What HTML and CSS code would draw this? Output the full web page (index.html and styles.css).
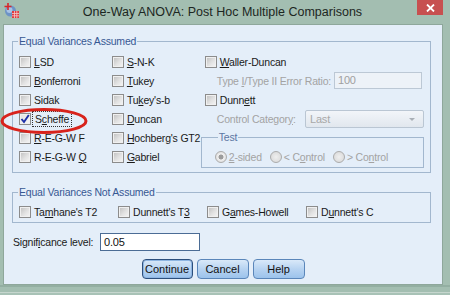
FILE: index.html
```html
<!DOCTYPE html>
<html lang="en">
<head>
    <meta charset="UTF-8">
    <title>One-Way ANOVA: Post Hoc Multiple Comparisons</title>
    <link rel="stylesheet" href="styles.css">
</head>
<body>
<div class="window">
    <div class="title_bar">
        <div class="app_icon">
            <svg width="15" height="15" viewBox="0 0 15 15">
                <circle cx="6.5" cy="8" r="5.5" fill="#6d93c6"/>
                <circle cx="5.5" cy="7" r="3" fill="#a9c3e4"/>
                <path d="M0.5 3.5 H7.5 M4 0 V7" stroke="#d8262a" stroke-width="1.6"/>
                <rect x="8" y="8" width="7" height="7" fill="#e03a3e"/>
                <path d="M8 10.5 H15 M8 12.8 H15 M10.5 8 V15 M12.8 8 V15" stroke="#f6c9c9" stroke-width="0.8"/>
            </svg>
        </div>
        <div class="title_text">One-Way ANOVA: Post Hoc Multiple Comparisons</div>
        <div class="close_btn">
            <svg width="9" height="8" viewBox="0 0 9 8">
                <path d="M1 0.5 L8 7.5 M8 0.5 L1 7.5" stroke="#ffffff" stroke-width="1.8"/>
            </svg>
        </div>
    </div>

    <div class="client">
        <fieldset class="group group_eq">
            <legend>Equal Variances Assumed</legend>
            <div class="col col_a">
                <div class="row"><span class="cb"></span><span><u>L</u>SD</span></div>
                <div class="row"><span class="cb"></span><span><u>B</u>onferroni</span></div>
                <div class="row"><span class="cb"></span><span>Sidak</span></div>
                <div class="row"><span class="cb checked">
                    <svg width="10" height="10" viewBox="0 0 10 10">
                        <path d="M1.5 5 L4 8 L8.8 1" fill="none" stroke="#1c2fa8" stroke-width="1.9"/>
                    </svg></span><span class="focus">S<u>c</u>heffe</span></div>
                <div class="row"><span class="cb"></span><span><u>R</u>-E-G-W F</span></div>
                <div class="row"><span class="cb"></span><span>R-E-G-W <u>Q</u></span></div>
            </div>
            <div class="col col_b">
                <div class="row"><span class="cb"></span><span><u>S</u>-N-K</span></div>
                <div class="row"><span class="cb"></span><span><u>T</u>ukey</span></div>
                <div class="row"><span class="cb"></span><span>Tu<u>k</u>ey's-b</span></div>
                <div class="row"><span class="cb"></span><span><u>D</u>uncan</span></div>
                <div class="row"><span class="cb"></span><span><u>H</u>ochberg's GT2</span></div>
                <div class="row"><span class="cb"></span><span><u>G</u>abriel</span></div>
            </div>
            <div class="col col_c">
                <div class="row"><span class="cb"></span><span><u>W</u>aller-Duncan</span></div>
                <div class="row sub_row">
                    <span class="dim">Type <u>I</u>/Type II Error Ratio:</span>
                    <span class="text_box ratio_box">100</span>
                </div>
                <div class="row"><span class="cb"></span><span>Dunn<u>e</u>tt</span></div>
                <div class="row sub_row">
                    <span class="dim">Control Categor<u>y</u>:</span>
                    <span class="combo">Last<span class="combo_arrow"></span></span>
                </div>
                <fieldset class="test_group">
                    <legend>Test</legend>
                    <div class="row radio_row">
                        <span class="radio_item"><span class="radio on"></span><span class="dim"><u>2</u>-sided</span></span>
                        <span class="radio_item"><span class="radio"></span><span class="dim">&lt; C<u>o</u>ntrol</span></span>
                        <span class="radio_item"><span class="radio"></span><span class="dim">&gt; Co<u>n</u>trol</span></span>
                    </div>
                </fieldset>
            </div>
        </fieldset>

        <fieldset class="group group_neq">
            <legend>Equal Variances Not Assumed</legend>
            <div class="row neq_item w99"><span class="cb"></span><span>Ta<u>m</u>hane's T2</span></div>
            <div class="row neq_item w89"><span class="cb"></span><span>Dunnett's T<u>3</u></span></div>
            <div class="row neq_item w99"><span class="cb"></span><span>G<u>a</u>mes-Howell</span></div>
            <div class="row neq_item"><span class="cb"></span><span>D<u>u</u>nnett's C</span></div>
        </fieldset>

        <div class="sig_row">
            <span class="sig_label">Signif<u>i</u>cance level:</span>
            <span class="text_box sig_box">0.05</span>
        </div>

        <div class="button_row">
            <div class="btn btn_default w51">Continue</div>
            <div class="btn w52">Cancel</div>
            <div class="btn w52">Help</div>
        </div>
    </div>

    <div class="frame_bottom">
        <div class="sheet_strip"></div>
    </div>

    <!-- red marker drawn over the dialog -->
    <svg class="marker" width="92" height="30" viewBox="0 0 92 30">
        <ellipse cx="44" cy="15" rx="42" ry="11.5" fill="none" stroke="#d8231c" stroke-width="3"/>
    </svg>
</div>
</body>
</html>
```

FILE: styles.css
```css
body {
    margin: 0;
    background-color: #a3beb1;
    font-family: "Liberation Sans", Arial, sans-serif;
}

.window {
    position: relative;
    width: 450px;
    height: 295px;
    display: flex;
    flex-direction: column;
    background-color: #a3beb1;
    overflow: hidden;
}

.title_bar {
    height: 24px;
    flex: none;
    display: grid;
    grid-template-columns: 1fr auto 1fr;
    align-items: start;
    padding-right: 5px;
}

.app_icon {
    margin: 3px 0 0 4px;
    width: 15px;
    height: 15px;
}

.title_text {
    font-size: 12.5px;
    line-height: 24px;
    color: #1c2622;
    white-space: nowrap;
}

.close_btn {
    justify-self: end;
    width: 26px;
    height: 15px;
    margin-right: 2px;
    background-color: #c75050;
    display: flex;
    align-items: center;
    justify-content: center;
}

.client {
    flex: none;
    box-sizing: border-box;
    height: 261px;
    margin: 0 7px 0 3px;
    border: 1px solid #8ea79b;
    background-color: #e4eef9;
    padding: 10px 11px 5px 8px;
    display: flex;
    flex-direction: column;
    font-size: 10.5px;
    letter-spacing: -0.2px;
    color: #1a1a1a;
}

.group {
    margin: 0;
    border: 1px solid #a2b7ce;
    padding: 5px 6px 4px 6px;
    display: flex;
    min-width: 0;
}

.group legend,
.test_group legend {
    padding: 0 1px;
    margin-left: -1px;
    line-height: 12px;
    color: #375893;
}

.col {
    display: flex;
    flex-direction: column;
}

.col_a,
.col_b {
    width: 94px;
}

.col_c {
    flex: 1;
}

.row {
    height: 19px;
    display: flex;
    align-items: center;
    gap: 3px;
    white-space: nowrap;
}

.cb {
    box-sizing: border-box;
    width: 12px;
    height: 12px;
    flex: none;
    border: 1px solid #8c8c8c;
    background: linear-gradient(135deg, #bebebe 0%, #e2e2e2 55%, #f6f6f6 100%);
    box-shadow: inset 0 0 0 1px #f0f0f0;
    display: flex;
    align-items: center;
    justify-content: center;
}

.cb.checked {
    background: linear-gradient(135deg, #e2e2e2 0%, #f6f6f6 100%);
}

.focus {
    outline: 1px dotted #333333;
    outline-offset: 1px;
    padding: 0 1px;
}

.dim {
    color: #a3a3a3;
}

.sub_row {
    padding-left: 12px;
}

.text_box {
    box-sizing: border-box;
    height: 17px;
    line-height: 15px;
    padding-left: 3px;
    display: block;
}

.ratio_box {
    width: 88px;
    margin-left: auto;
    margin-right: 2px;
    border: 1px solid #bcc8d5;
    background-color: #edf2f8;
    color: #a0a0a0;
    font-size: 11px;
}

.combo {
    box-sizing: border-box;
    position: relative;
    width: 119px;
    height: 18px;
    margin-left: auto;
    line-height: 16px;
    padding-left: 4px;
    border: 1px solid #bac6d3;
    border-radius: 2px;
    background: linear-gradient(#f2f5f9, #e1e7ee);
    color: #a8a8a8;
    font-size: 11px;
}

.combo_arrow {
    position: absolute;
    right: 8px;
    top: 7px;
    border-left: 3px solid transparent;
    border-right: 3px solid transparent;
    border-top: 3px solid #a9afb6;
}

.test_group {
    margin: 3px 0 0 -4px;
    border: 1px solid #a2b7ce;
    padding: 4px 0 1px 13px;
    min-width: 0;
}

.test_group legend {
    margin-left: 3px;
    color: #5c76a2;
}

.radio_row {
    gap: 8px;
}

.radio_item {
    display: flex;
    align-items: center;
    gap: 2px;
}

.radio {
    box-sizing: border-box;
    width: 12px;
    height: 12px;
    border-radius: 50%;
    border: 1px solid #ababab;
    background: radial-gradient(circle, #efefef 0, #d6d6d6 100%);
}

.radio.on {
    background: radial-gradient(circle, #9c9c9c 0, #9c9c9c 2.2px, #f0f0f0 2.8px, #d4d4d4 100%);
}

.group_neq {
    margin-top: 13px;
    padding: 4px 6px 1px 6px;
}

.w99 {
    width: 99px;
}

.w89 {
    width: 89px;
}

.sig_row {
    margin-top: 10px;
    height: 18px;
    display: flex;
    align-items: center;
}

.sig_label {
    width: 87px;
    margin-left: 1px;
    white-space: nowrap;
}

.sig_box {
    width: 100px;
    height: 18px;
    line-height: 16px;
    border: 1px solid #4b6c95;
    background-color: #ffffff;
    font-size: 11px;
    color: #111111;
}

.button_row {
    margin-top: 8px;
    padding-left: 3px;
    display: flex;
    justify-content: center;
    gap: 4px;
}

.btn {
    box-sizing: border-box;
    height: 20px;
    line-height: 18px;
    text-align: center;
    border: 1px solid #5a86ba;
    border-radius: 4px;
    background: linear-gradient(#d9e9f9 0%, #b7d3f1 50%, #9cc3ec 100%);
    font-size: 11px;
    letter-spacing: 0;
    color: #111111;
}

.btn_default {
    border-color: #2c4f7c;
    box-shadow: inset 0 0 0 1px #8fb6e2;
}

.w51 {
    width: 51px;
}

.w52 {
    width: 52px;
}

.frame_bottom {
    flex: 1;
    display: flex;
    flex-direction: column;
    justify-content: flex-end;
    border-top: 2px solid #93afa2;
}

.sheet_strip {
    height: 2px;
    border-top: 1px solid #c6d6ce;
    background-color: #a8c2b6;
}

.marker {
    position: absolute;
    left: 0;
    top: 106px;
}
```
